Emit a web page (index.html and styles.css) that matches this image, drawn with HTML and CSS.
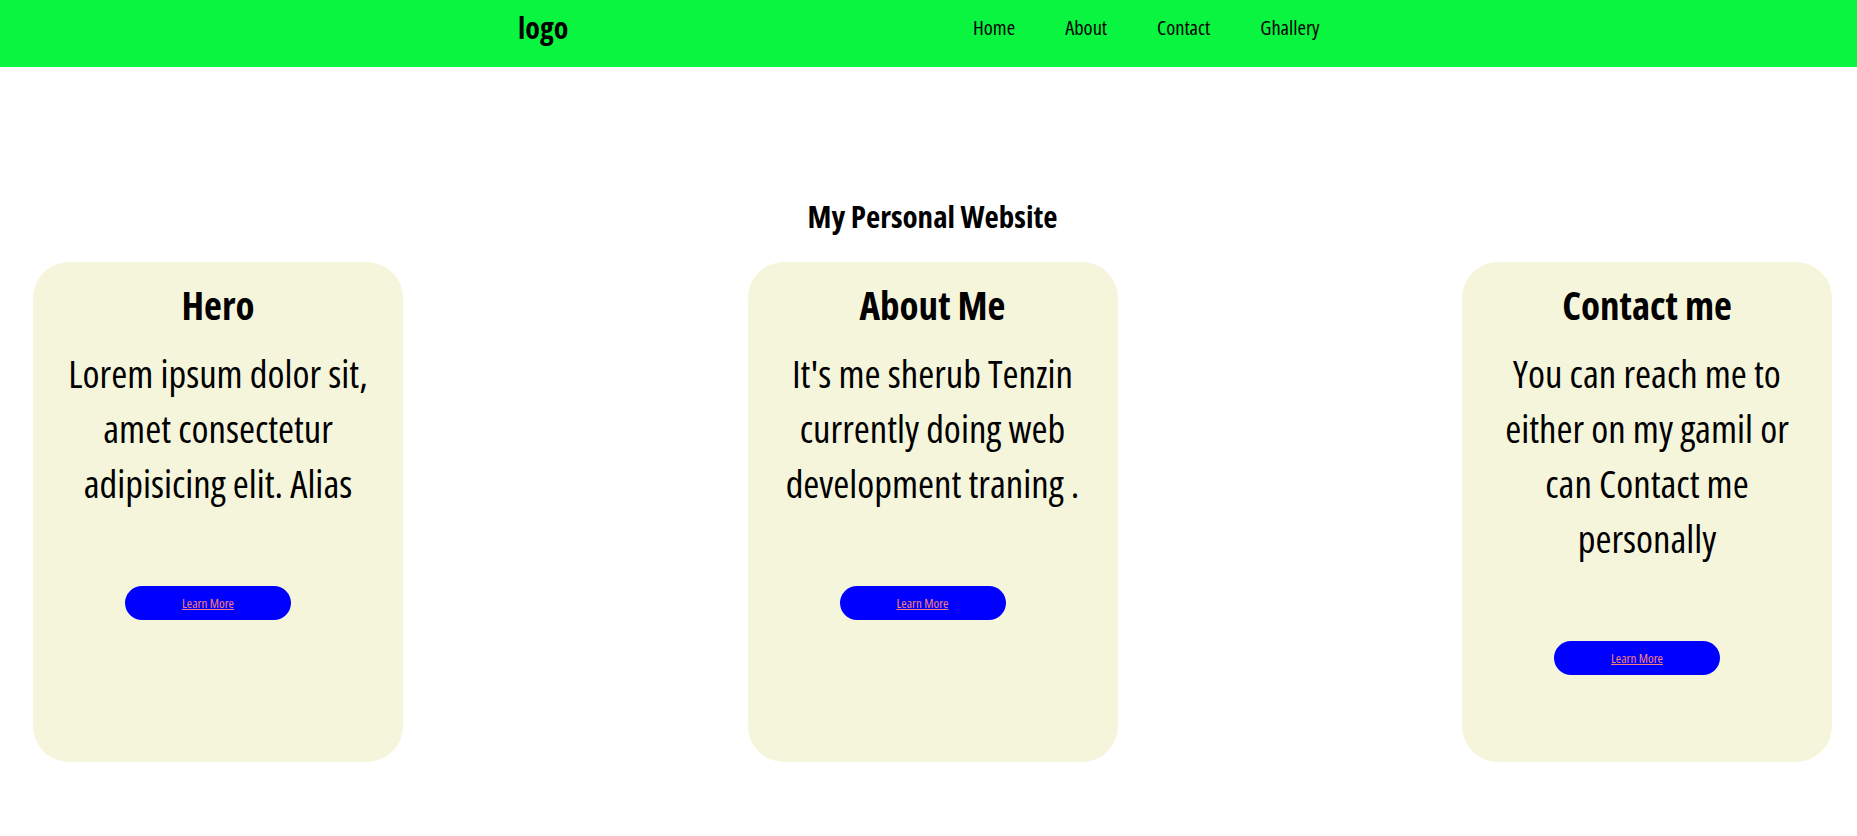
FILE: index.html
```html
<!DOCTYPE html>
<html lang="en">
<head>
<meta charset="utf-8">
<title>My Personal Website</title>
<link rel="stylesheet" href="styles.css">
</head>
<body>
<header class="topbar">
  <div class="logo">logo</div>
  <nav class="menu">
    <a href="#" class="menu-link">Home</a>
    <a href="#" class="menu-link">About</a>
    <a href="#" class="menu-link">Contact</a>
    <a href="#" class="menu-link">Ghallery</a>
  </nav>
</header>
<main class="content">
  <h1 class="page-title">My Personal Website</h1>
  <section class="cards">
    <article class="card">
      <h2 class="card-title">Hero</h2>
      <p class="card-text">Lorem ipsum dolor sit, amet consectetur adipisicing elit. Alias</p>
      <a href="#" class="card-btn">Learn More</a>
    </article>
    <article class="card">
      <h2 class="card-title">About Me</h2>
      <p class="card-text">It's me sherub Tenzin currently doing web development traning .</p>
      <a href="#" class="card-btn">Learn More</a>
    </article>
    <article class="card">
      <h2 class="card-title">Contact me</h2>
      <p class="card-text">You can reach me to either on my gamil or can Contact me personally</p>
      <a href="#" class="card-btn">Learn More</a>
    </article>
  </section>
</main>
</body>
</html>
```
FILE: styles.css
```css
* { box-sizing: border-box; }

body {
  margin: 0;
  font-family: "Open Sans", "Roboto", sans-serif;
  font-stretch: 75%;
  color: #000;
  background: #fff;
}

.topbar {
  height: 67px;
  background: #09f53f;
  display: flex;
  align-items: center;
  padding-left: 518px;
}

.logo {
  width: 455px;
  font-size: 30px;
  font-weight: 700;
  line-height: 1;
  padding-bottom: 12px;
}

.menu {
  display: flex;
  gap: 50px;
  padding-bottom: 12px;
}

.menu-link {
  color: #000;
  text-decoration: none;
  font-size: 20.5px;
  font-weight: 430;
  line-height: 1;
}

.content {
  padding-left: 8px;
}

.page-title {
  margin: 0;
  padding-top: 131px;
  text-align: center;
  font-size: 31px;
  font-weight: 700;
  line-height: 36px;
  height: 195px;
}

.cards {
  display: flex;
  justify-content: space-between;
  padding: 0 25px 0 25px;
}

.card {
  width: 370px;
  height: 500px;
  background: #f5f5dc;
  border-radius: 36px;
  padding: 18px 20px 0;
  text-align: center;
}

.card-title {
  margin: 0;
  font-size: 39px;
  font-weight: 700;
  line-height: 50px;
}

.card-text {
  margin: 16px 0 0;
  font-size: 38.7px;
  font-weight: 440;
  line-height: 55px;
}

.card-btn {
  display: flex;
  align-items: center;
  justify-content: center;
  width: 166px;
  height: 34px;
  margin: 75px 0 0 72px;
  background: #0000ff;
  border-radius: 17px;
  color: #fa8072;
  font-size: 13px;
  font-weight: 500;
  text-decoration: underline;
}
```
